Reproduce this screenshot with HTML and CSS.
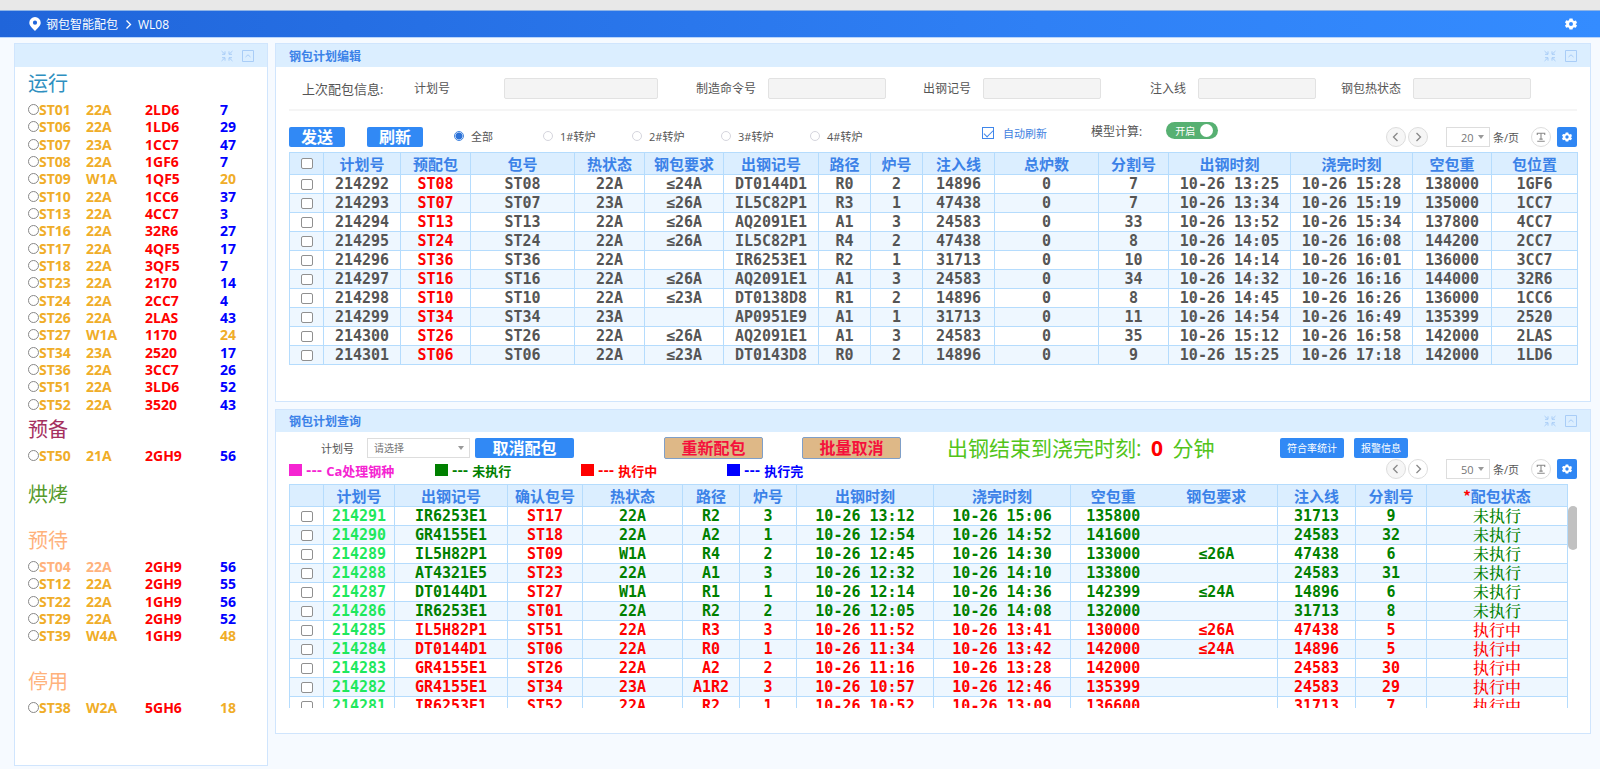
FILE: index.html
```html
<!DOCTYPE html>
<html lang="zh-CN">
<head>
<meta charset="utf-8">
<title>钢包智能配包</title>
<link rel="stylesheet" href="styles.css">
</head>
<body>
<svg class="defs" aria-hidden="true">
  <symbol id="i-gear" viewBox="0 0 24 24"><path fill-rule="evenodd" d="M9 1h6l1 3.6 2.2 1.3L22 5l2 5-2.700 2v.5L24 15l-2.500 4.500-3.600-.9-2 1.200L15 23H9l-1-3.300-2.200-1.200-3.500 1L0 15l2.600-2.600v-.8L0 9l2.400-4.400 3.500 1L8 4.400zM12 8a4 4 0 1 0 0 8 4 4 0 0 0 0-8z"/></symbol>
  <symbol id="i-shrink" viewBox="0 0 12 12"><path d="M.5 1 4 4.300M1 4.300h3V1.300M11.500 1 8 4.300M11 4.300H8V1.300M.5 11 4 7.700M1 7.700h3v3M11.500 11 8 7.700M11 7.700H8v3" fill="none" stroke="currentColor"/></symbol>
  <symbol id="i-fold" viewBox="0 0 12 12"><path d="M.5.500h11v11H.5zM3.500 7 6 4.800 8.500 7" fill="none" stroke="currentColor"/></symbol>
  <symbol id="i-left" viewBox="0 0 10 10"><path d="M6.500 1 2.500 5l4 4" fill="none" stroke="currentColor" stroke-width="1.300"/></symbol>
  <symbol id="i-right" viewBox="0 0 10 10"><path d="M3.500 1l4 4-4 4" fill="none" stroke="currentColor" stroke-width="1.300"/></symbol>
  <symbol id="i-text" viewBox="0 0 12 12"><path d="M1.500 3.500v-2h9v2M6 1.500v7M4 8.500h4M1.500 11h9" fill="none" stroke="currentColor" stroke-width="1.300"/></symbol>
</svg>

<div class="strip"></div>
<header class="topbar">
  <svg class="pin" viewBox="0 0 12 14"><path fill="#fff" fill-rule="evenodd" d="M6 0a5.700 5.700 0 0 0-5.700 5.700C.3 9 3.500 11 6 14c2.500-3 5.700-5 5.700-8.300A5.700 5.700 0 0 0 6 0zm0 3.600a2.100 2.100 0 1 1 0 4.200 2.100 2.100 0 0 1 0-4.200z"/></svg>
  <nav class="crumbs"><span>钢包智能配包</span><svg class="crumb-sep" viewBox="0 0 10 10"><use href="#i-right"/></svg><span>WL08</span></nav>
  <button class="icon-btn gear" aria-label="设置"><svg><use href="#i-gear"/></svg></button>
</header>

<main class="page">
  <aside class="panel side">
    <div class="panel-head"><span></span><span class="tools"><button class="icon-btn" aria-label="缩小"><svg><use href="#i-shrink"/></svg></button><button class="icon-btn" aria-label="折叠"><svg><use href="#i-fold"/></svg></button></span></div>
    <div class="side-body" id="ladles"></div>
  </aside>

  <div class="stack">
    <section class="panel">
      <div class="panel-head"><h2>钢包计划编辑</h2><span class="tools"><button class="icon-btn" aria-label="缩小"><svg><use href="#i-shrink"/></svg></button><button class="icon-btn" aria-label="折叠"><svg><use href="#i-fold"/></svg></button></span></div>
      <div class="panel-body edit-body">
        <div class="last-info">
          <span class="info-title">上次配包信息:</span>
          <div class="field wide"><label for="f1">计划号</label><input id="f1" type="text" readonly></div>
          <div class="field"><label for="f2">制造命令号</label><input id="f2" type="text" readonly></div>
          <div class="field"><label for="f3">出钢记号</label><input id="f3" type="text" readonly></div>
          <div class="field"><label for="f4">注入线</label><input id="f4" type="text" readonly></div>
          <div class="field"><label for="f5">钢包热状态</label><input id="f5" type="text" readonly></div>
        </div>
        <div class="toolbar">
          <button class="btn">发送</button>
          <button class="btn second">刷新</button>
          <div class="radios">
            <label><input type="radio" name="furnace" checked>全部</label>
            <label><input type="radio" name="furnace">1#转炉</label>
            <label><input type="radio" name="furnace">2#转炉</label>
            <label><input type="radio" name="furnace">3#转炉</label>
            <label><input type="radio" name="furnace">4#转炉</label>
          </div>
          <div class="switches">
            <label class="auto"><input type="checkbox" checked>自动刷新</label>
            <span class="model">模型计算:</span>
            <button class="toggle" role="switch" aria-checked="true">开启<i></i></button>
          </div>
          <div class="pager">
            <button class="round off" aria-label="上一页"><svg><use href="#i-left"/></svg></button>
            <button class="round off" aria-label="下一页"><svg><use href="#i-right"/></svg></button>
            <span class="select-wrap size"><select aria-label="每页条数"><option>20</option></select></span>
            <span class="per">条/页</span>
            <button class="round text" aria-label="文本"><svg><use href="#i-text"/></svg></button>
            <button class="square" aria-label="列设置"><svg><use href="#i-gear"/></svg></button>
          </div>
        </div>
        <table class="grid edit-grid">
          <colgroup><col><col><col><col><col><col><col><col><col><col><col><col><col><col><col><col></colgroup>
          <thead><tr><th><input type="checkbox" aria-label="全选"></th><th>计划号</th><th>预配包</th><th>包号</th><th>热状态</th><th>钢包要求</th><th>出钢记号</th><th>路径</th><th>炉号</th><th>注入线</th><th>总炉数</th><th>分割号</th><th>出钢时刻</th><th>浇完时刻</th><th>空包重</th><th>包位置</th></tr></thead>
          <tbody id="editRows"></tbody>
        </table>
      </div>
    </section>

    <section class="panel">
      <div class="panel-head low"><h2>钢包计划查询</h2><span class="tools"><button class="icon-btn" aria-label="缩小"><svg><use href="#i-shrink"/></svg></button><button class="icon-btn" aria-label="折叠"><svg><use href="#i-fold"/></svg></button></span></div>
      <div class="panel-body query-body">
        <div class="query-bar">
          <label class="plan-label" for="plan">计划号</label>
          <span class="select-wrap plan"><select id="plan"><option>请选择</option></select></span>
          <button class="btn cancel">取消配包</button>
          <button class="btn tan">重新配包</button>
          <button class="btn tan batch">批量取消</button>
          <p class="elapsed">出钢结束到浇完时刻: <b>0</b> 分钟</p>
          <button class="btn small rate">符合率统计</button>
          <button class="btn small">报警信息</button>
        </div>
        <div class="legend-bar">
          <ul class="legend">
            <li class="ca"><span class="dash">---</span> Ca处理钢种</li>
            <li class="todo"><span class="dash">---</span> 未执行</li>
            <li class="doing"><span class="dash">---</span> 执行中</li>
            <li class="done"><span class="dash">---</span> 执行完</li>
          </ul>
          <div class="pager">
            <button class="round off" aria-label="上一页"><svg><use href="#i-left"/></svg></button>
            <button class="round" aria-label="下一页"><svg><use href="#i-right"/></svg></button>
            <span class="select-wrap size"><select aria-label="每页条数"><option>50</option></select></span>
            <span class="per">条/页</span>
            <button class="round text" aria-label="文本"><svg><use href="#i-text"/></svg></button>
            <button class="square" aria-label="列设置"><svg><use href="#i-gear"/></svg></button>
          </div>
        </div>
        <div class="scroller">
          <table class="grid query-grid">
            <colgroup><col><col><col><col><col><col><col><col><col><col><col><col><col><col></colgroup>
            <thead><tr><th></th><th>计划号</th><th>出钢记号</th><th>确认包号</th><th>热状态</th><th>路径</th><th>炉号</th><th>出钢时刻</th><th>浇完时刻</th><th>空包重</th><th>钢包要求</th><th>注入线</th><th>分割号</th><th><em>*</em>配包状态</th></tr></thead>
            <tbody id="queryRows"></tbody>
          </table>
          <div class="track"><div class="thumb"></div></div>
        </div>
      </div>
    </section>
  </div>
</main>
<script src="app.js"></script>
</body>
</html>
```
FILE: styles.css
```css
* { box-sizing: border-box; }
body {
  margin: 0;
  min-height: 100vh;
  display: flex;
  flex-direction: column;
  background: #f6faff;
  color: #555;
  font-family: "Open Sans", "Noto Sans CJK SC", sans-serif;
  font-size: 12px;
}
button, input, select { font-family: inherit; margin: 0; }
h2, h3, p, ul { margin: 0; padding: 0; }
.defs { position: absolute; width: 0; height: 0; }

.strip { height: 10px; background: #e8e8e8; }
.topbar {
  display: flex;
  align-items: center;
  height: 28px;
  padding: 0 23px 0 29px;
  background: linear-gradient(90deg, #2065da, #2f80f5 65%, #348cff);
  border-top: 1px solid #8fb4e6;
  border-bottom: 1px solid #b9d5fb;
  color: #fff;
}
.pin { width: 12px; height: 14px; }
.crumbs { display: flex; align-items: center; gap: 5px; margin-left: 5px; }
.crumb-sep { width: 10px; height: 11px; }
.icon-btn { display: flex; padding: 0; border: 0; background: none; color: #a9cdf7; }
.icon-btn svg { width: 12px; height: 12px; }
.gear { margin-left: auto; }
.gear svg { fill: #fff; }

.page { flex: 1; display: flex; gap: 7px; padding: 5px 9px 3px 14px; }
.panel { background: #fff; border: 1px solid #d0e5fd; }
.side { flex: none; width: 254px; }
.stack { flex: 1; min-width: 0; display: flex; flex-direction: column; gap: 7px; }
.panel-head {
  display: flex;
  align-items: center;
  justify-content: space-between;
  height: 23px;
  padding: 0 13px;
  background: #dbeeff;
}
.panel-head.low { height: 22px; }
.panel-head h2 { font-size: 12px; font-weight: 700; color: #3b82e8; }
.tools { display: flex; gap: 9px; }
.panel-body { padding: 0 13px; }

.side-body { padding: 0 13px 16px; }
.group { font-size: 20px; line-height: 34px; font-weight: 400; }
.run { color: #2e8fc0; }
.ready { color: #a53060; }
.bake { color: #559a2c; margin-top: 14px; }
.wait { color: #ffb27c; margin-top: 12px; }
.stop { color: #ffb27c; margin-top: 21px; }
.ladles { list-style: none; }
.ladle {
  display: grid;
  grid-template-columns: 58px 59px 75px 1fr;
  align-items: center;
  height: 17px;
  font-size: 14px;
  line-height: 17px;
  font-weight: 700;
  color: #f0ad28;
}
.ladle:nth-child(3n) { height: 18px; }
.ladle label { display: flex; align-items: center; }
.ladle input {
  appearance: none;
  width: 11px;
  height: 11px;
  border: 1px solid #888;
  border-radius: 50%;
  background: #fff;
}
.ladle .spot { color: #f00; }
.ladle .count { color: #00f; }
.ladle .late { color: #f0ad28; }
.ladle.pale { color: #ffb27c; }

.edit-body { padding-bottom: 36px; }
.last-info {
  display: grid;
  grid-template-columns: 125fr 244fr 228fr 215fr 215fr 215fr 46fr;
  align-items: center;
  height: 44px;
  border-bottom: 2px solid #f5f5f5;
}
.info-title { padding-left: 13px; font-size: 13px; white-space: nowrap; }
.field { display: flex; align-items: center; justify-content: flex-end; gap: 12px; white-space: nowrap; }
.field.wide { justify-content: space-between; }
.field input {
  width: 118px;
  height: 21px;
  border: 1px solid #e2e2e2;
  border-radius: 2px;
  background: #f4f4f4;
}
.field.wide input { width: 154px; }

.toolbar { display: flex; align-items: flex-end; height: 36px; }
.btn {
  width: 56px;
  height: 20px;
  padding: 0;
  border: 0;
  border-radius: 2px;
  background: #3189f5;
  color: #fff;
  font-size: 16px;
  line-height: 20px;
  font-weight: 700;
  white-space: nowrap;
}
.btn.second { margin-left: 22px; }
.radios { display: flex; margin-left: 31px; }
.radios label { display: flex; align-items: center; gap: 7px; width: 89px; height: 22px; font-size: 11px; white-space: nowrap; }
.radios input {
  appearance: none;
  width: 10px;
  height: 10px;
  border: 1px solid #d5d5dd;
  border-radius: 50%;
  background: #fff;
}
.radios input:checked { border-color: #4285e0; background: radial-gradient(circle, #2c72d8 0 3px, #fff 4px); }
.switches { display: flex; align-items: center; align-self: flex-start; height: 17px; margin: 11px 0 0 83px; white-space: nowrap; }
.auto { display: flex; align-items: center; gap: 9px; padding-top: 4px; font-size: 11px; color: #3f7fe0; }
.auto input {
  appearance: none;
  display: flex;
  justify-content: center;
  width: 12px;
  height: 12px;
  border: 1px solid #3f86ea;
}
.auto input:checked::after {
  content: "";
  width: 4px;
  height: 8px;
  border: solid #3f86ea;
  border-width: 0 1px 1px 0;
  transform: rotate(45deg);
}
.model { margin-left: 44px; }
.toggle {
  display: flex;
  align-items: center;
  justify-content: space-between;
  width: 52px;
  height: 17px;
  margin-left: 24px;
  padding: 0 5px 0 9px;
  border: 0;
  border-radius: 9px;
  background: #57b072;
  color: #fff;
  font-size: 10px;
}
.toggle i { width: 13px; height: 13px; border-radius: 50%; background: #fff; }

.pager { display: flex; align-items: center; margin-left: auto; height: 20px; }
.round {
  display: flex;
  align-items: center;
  justify-content: center;
  width: 20px;
  height: 20px;
  margin-right: 2px;
  padding: 0;
  border: 1px solid #ddd;
  border-radius: 50%;
  background: #fff;
  color: #888;
}
.round.off { background: #f6f6f6; }
.round svg { width: 10px; height: 10px; }
.round.text { margin: 0 6px 0 14px; }
.round.text svg { width: 10px; height: 12px; }
.select-wrap { position: relative; display: block; }
.select-wrap::after {
  content: "";
  position: absolute;
  right: 6px;
  top: 8px;
  border: 3px solid transparent;
  border-top: 4px solid #999;
  border-bottom: 0;
}
.select-wrap select {
  appearance: none;
  width: 100%;
  height: 20px;
  padding: 0 6px;
  border: 1px solid #ddd;
  border-radius: 0;
  background: #fff;
  color: #777;
  font-size: 11px;
}
.select-wrap.size { width: 44px; margin-left: 16px; }
.select-wrap.size select { padding-left: 14px; }
.select-wrap.plan { width: 103px; }
.select-wrap.plan select { font-size: 10px; }
.per { margin-left: 3px; width: 24px; font-size: 11px; white-space: nowrap; }
.square {
  display: flex;
  align-items: center;
  justify-content: center;
  width: 20px;
  height: 20px;
  padding: 0;
  border: 0;
  border-radius: 2px;
  background: #2f86f3;
}
.square svg { width: 10px; height: 10px; fill: #fff; }

.grid {
  width: 100%;
  table-layout: fixed;
  border-collapse: collapse;
  font-family: "DejaVu Sans Mono", "Noto Sans CJK SC", monospace;
  font-size: 15px;
  font-weight: 700;
}
.grid th, .grid td {
  height: 19px;
  padding: 0;
  border: 1px solid #b5dcfd;
  line-height: 18px;
  text-align: center;
  white-space: nowrap;
}
.grid th { height: 22px; background: #dbeeff; color: #3b82e8; font-family: "Noto Sans CJK SC", sans-serif; line-height: 20px; }
.grid th em { color: #f00; font-style: normal; }
.grid tbody tr:nth-child(even) { background: #eef7ff; }
.grid input {
  appearance: none;
  display: block;
  width: 12px;
  height: 11px;
  margin: 0 auto;
  border: 1px solid #909090;
  border-radius: 2px;
  background: #fff;
}
.edit-grid { margin-top: 5px; }
.edit-grid .pre { color: #f00; }
.edit-grid col { width: 70px; }
.edit-grid col:nth-child(1) { width: 34px; }
.edit-grid col:nth-child(2) { width: 77px; }
.edit-grid col:nth-child(4), .edit-grid col:nth-child(11) { width: 104px; }
.edit-grid col:nth-child(6), .edit-grid col:nth-child(15) { width: 79px; }
.edit-grid col:nth-child(7) { width: 95px; }
.edit-grid col:nth-child(8), .edit-grid col:nth-child(9) { width: 52px; }
.edit-grid col:nth-child(10) { width: 72px; }
.edit-grid col:nth-child(13), .edit-grid col:nth-child(14) { width: 122px; }
.edit-grid col:nth-child(16) { width: 86px; }

.query-body { padding-top: 5px; padding-bottom: 25px; }
.query-bar { display: flex; align-items: center; height: 22px; white-space: nowrap; }
.plan-label { width: 78px; padding-left: 32px; font-size: 11px; }
.btn.cancel { width: 99px; margin-left: 5px; }
.btn.tan { width: 99px; height: 22px; margin-left: 90px; border: 1px solid #7f9fc8; background: #deb887; color: #f5103c; }
.btn.batch { margin-left: 39px; }
.elapsed { width: 287px; margin-left: 46px; font-size: 21px; line-height: 22px; color: #52c41a; }
.elapsed b { margin: 0 4px; color: #f00; }
.btn.small { width: 54px; margin-left: 10px; font-size: 10px; font-weight: 400; }
.btn.rate { width: 64px; margin-left: 46px; }
.legend-bar { display: flex; align-items: flex-start; }
.legend { display: grid; grid-template-columns: repeat(4, 146px); list-style: none; padding-top: 2px; }
.legend li { display: flex; align-items: center; gap: 4px; height: 18px; font-size: 13px; font-weight: 700; white-space: nowrap; }
.legend li::before { content: ""; width: 13px; height: 12px; background: currentColor; }
.legend .dash { font-family: "DejaVu Sans", sans-serif; }
.ca { color: #f524d2; }
.todo { color: #008000; }
.doing { color: #f00; }
.done { color: #00f; }

.scroller { display: grid; grid-template-columns: 1fr 10px; align-items: start; max-height: 224px; margin-top: 5px; overflow: hidden; }
.track { padding-top: 22px; }
.thumb { height: 44px; border-radius: 5px; background: #c1c1c1; }
.query-grid .plan-no { color: #1ee85c; }
.query-grid .ladle-no { color: #f00; }
.query-grid .status { font-family: "Noto Serif CJK SC", "Noto Sans CJK SC", serif; font-size: 16px; font-weight: 500; }
.query-grid th:nth-child(10), .query-grid td:nth-child(10) { border-right: 0; }
.query-grid th:nth-child(11), .query-grid td:nth-child(11) { border-left: 0; }
.query-grid col { width: 71px; }
.query-grid col:nth-child(1) { width: 34px; }
.query-grid col:nth-child(3) { width: 113px; }
.query-grid col:nth-child(4) { width: 75px; }
.query-grid col:nth-child(5) { width: 100px; }
.query-grid col:nth-child(6), .query-grid col:nth-child(7) { width: 57px; }
.query-grid col:nth-child(8), .query-grid col:nth-child(9) { width: 137px; }
.query-grid col:nth-child(10) { width: 85px; }
.query-grid col:nth-child(11) { width: 122px; }
.query-grid col:nth-child(12) { width: 78px; }
.query-grid col:nth-child(14) { width: 141px; }
```
FILE: app.js
```js
const groups = [
  ["运行", "run", `ST01 22A 2LD6 7
ST06 22A 1LD6 29
ST07 23A 1CC7 47
ST08 22A 1GF6 7
ST09 W1A 1QF5 20
ST10 22A 1CC6 37
ST13 22A 4CC7 3
ST16 22A 32R6 27
ST17 22A 4QF5 17
ST18 22A 3QF5 7
ST23 22A 2170 14
ST24 22A 2CC7 4
ST26 22A 2LAS 43
ST27 W1A 1170 24
ST34 23A 2520 17
ST36 22A 3CC7 26
ST51 22A 3LD6 52
ST52 22A 3520 43`],
  ["预备", "ready", "ST50 21A 2GH9 56"],
  ["烘烤", "bake", ""],
  ["预待", "wait", `ST04 22A 2GH9 56
ST12 22A 2GH9 55
ST22 22A 1GH9 56
ST29 22A 2GH9 52
ST39 W4A 1GH9 48`],
  ["停用", "stop", "ST38 W2A 5GH6 18"]
];

const editRows = `214292,ST08,ST08,22A,≤24A,DT0144D1,R0,2,14896,0,7,10-26 13:25,10-26 15:28,138000,1GF6
214293,ST07,ST07,23A,≤26A,IL5C82P1,R3,1,47438,0,7,10-26 13:34,10-26 15:19,135000,1CC7
214294,ST13,ST13,22A,≤26A,AQ2091E1,A1,3,24583,0,33,10-26 13:52,10-26 15:34,137800,4CC7
214295,ST24,ST24,22A,≤26A,IL5C82P1,R4,2,47438,0,8,10-26 14:05,10-26 16:08,144200,2CC7
214296,ST36,ST36,22A,,IR6253E1,R2,1,31713,0,10,10-26 14:14,10-26 16:01,136000,3CC7
214297,ST16,ST16,22A,≤26A,AQ2091E1,A1,3,24583,0,34,10-26 14:32,10-26 16:16,144000,32R6
214298,ST10,ST10,22A,≤23A,DT0138D8,R1,2,14896,0,8,10-26 14:45,10-26 16:26,136000,1CC6
214299,ST34,ST34,23A,,AP0951E9,A1,1,31713,0,11,10-26 14:54,10-26 16:49,135399,2520
214300,ST26,ST26,22A,≤26A,AQ2091E1,A1,3,24583,0,35,10-26 15:12,10-26 16:58,142000,2LAS
214301,ST06,ST06,22A,≤23A,DT0143D8,R0,2,14896,0,9,10-26 15:25,10-26 17:18,142000,1LD6`;

const queryRows = `214291,IR6253E1,ST17,22A,R2,3,10-26 13:12,10-26 15:06,135800,,31713,9,未执行
214290,GR4155E1,ST18,22A,A2,1,10-26 12:54,10-26 14:52,141600,,24583,32,未执行
214289,IL5H82P1,ST09,W1A,R4,2,10-26 12:45,10-26 14:30,133000,≤26A,47438,6,未执行
214288,AT4321E5,ST23,22A,A1,3,10-26 12:32,10-26 14:10,133800,,24583,31,未执行
214287,DT0144D1,ST27,W1A,R1,1,10-26 12:14,10-26 14:36,142399,≤24A,14896,6,未执行
214286,IR6253E1,ST01,22A,R2,2,10-26 12:05,10-26 14:08,132000,,31713,8,未执行
214285,IL5H82P1,ST51,22A,R3,3,10-26 11:52,10-26 13:41,130000,≤26A,47438,5,执行中
214284,DT0144D1,ST06,22A,R0,1,10-26 11:34,10-26 13:42,142000,≤24A,14896,5,执行中
214283,GR4155E1,ST26,22A,A2,2,10-26 11:16,10-26 13:28,142000,,24583,30,执行中
214282,GR4155E1,ST34,23A,A1R2,3,10-26 10:57,10-26 12:46,135399,,24583,29,执行中
214281,IR6253E1,ST52,22A,R2,1,10-26 10:52,10-26 13:09,136600,,31713,7,执行中`;

const amberCounts = ["ST09", "ST27", "ST39", "ST38"];

document.getElementById("ladles").innerHTML = groups.map(([name, cls, rows]) => {
  const items = rows ? rows.split("\n").map(line => {
    const [no, heat, spot, count] = line.split(" ");
    return `<li class="ladle${no === "ST04" ? " pale" : ""}"><label><input type="radio" name="ladle">${no}</label><span>${heat}</span><span class="spot">${spot}</span><span class="count${amberCounts.includes(no) ? " late" : ""}">${count}</span></li>`;
  }).join("") : "";
  return `<h3 class="group ${cls}">${name}</h3><ul class="ladles">${items}</ul>`;
}).join("");

function fill(id, text, rowClass, cellClasses) {
  document.getElementById(id).innerHTML = text.split("\n").map(line => {
    const cells = line.split(",");
    const tds = cells.map((c, i) => `<td${cellClasses[i] ? ` class="${cellClasses[i]}"` : ""}>${c}</td>`).join("");
    return `<tr class="${rowClass(cells)}"><td><input type="checkbox" aria-label="选择 ${cells[0]}"></td>${tds}</tr>`;
  }).join("");
}

fill("editRows", editRows, () => "plan", { 1: "pre" });
fill("queryRows", queryRows, c => c[12] === "未执行" ? "todo" : "doing", { 0: "plan-no", 2: "ladle-no", 12: "status" });
```
